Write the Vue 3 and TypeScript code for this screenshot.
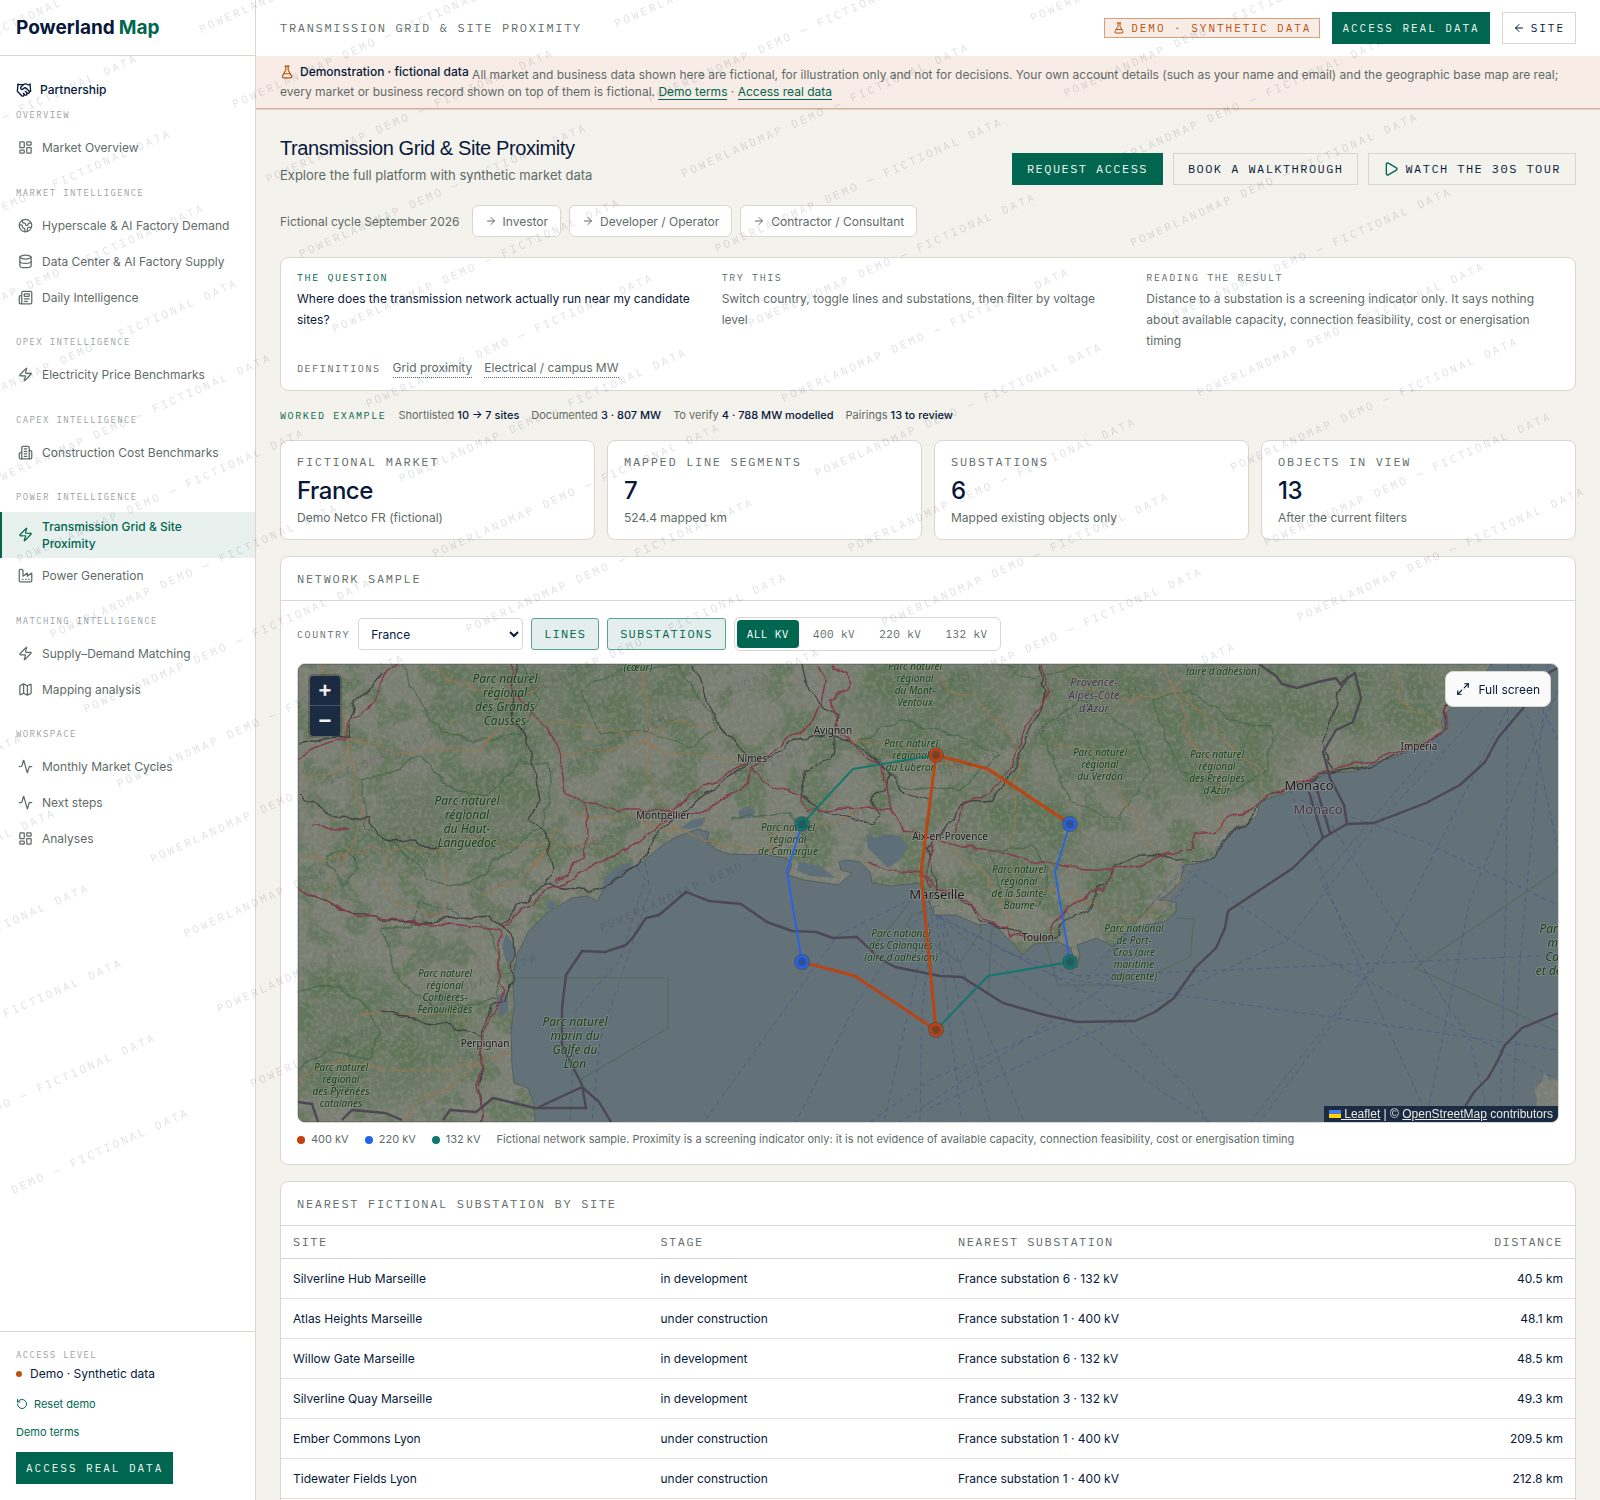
<script setup lang="ts">
import { ref } from 'vue'

type IconName =
  | 'handshake' | 'dashboard' | 'earth' | 'database' | 'newspaper' | 'zap' | 'building'
  | 'factory' | 'map' | 'activity' | 'reset' | 'flask' | 'expand' | 'play' | 'left' | 'right'

const icons: Record<IconName, string[]> = {
  handshake: [
    'm11 17 2 2a1 1 0 1 0 3-3',
    'm14 14 2.5 2.5a1 1 0 1 0 3-3l-3.88-3.88a3 3 0 0 0-4.24 0l-.88.88a1 1 0 1 1-3-3l2.81-2.81a5.79 5.79 0 0 1 7.06-.87l.47.28a2 2 0 0 0 1.42.25L21 4',
    'm21 3 1 11h-2',
    'M3 3 2 14l6.5 6.5a1 1 0 1 0 3-3',
    'M3 4h8',
  ],
  dashboard: [
    'M4 3h5a1 1 0 0 1 1 1v7a1 1 0 0 1-1 1H4a1 1 0 0 1-1-1V4a1 1 0 0 1 1-1z',
    'M15 3h5a1 1 0 0 1 1 1v3a1 1 0 0 1-1 1h-5a1 1 0 0 1-1-1V4a1 1 0 0 1 1-1z',
    'M15 12h5a1 1 0 0 1 1 1v7a1 1 0 0 1-1 1h-5a1 1 0 0 1-1-1v-7a1 1 0 0 1 1-1z',
    'M4 16h5a1 1 0 0 1 1 1v3a1 1 0 0 1-1 1H4a1 1 0 0 1-1-1v-3a1 1 0 0 1 1-1z',
  ],
  earth: [
    'M21.54 15H17a2 2 0 0 0-2 2v4.54',
    'M7 3.34V5a3 3 0 0 0 3 3a2 2 0 0 1 2 2c0 1.1.9 2 2 2a2 2 0 0 0 2-2c0-1.1.9-2 2-2h3.17',
    'M11 21.95V18a2 2 0 0 0-2-2a2 2 0 0 1-2-2v-1a2 2 0 0 0-2-2H2.05',
    'M2 12a10 10 0 1 0 20 0a10 10 0 1 0-20 0',
  ],
  database: ['M3 5a9 3 0 1 0 18 0a9 3 0 1 0-18 0', 'M3 5V19A9 3 0 0 0 21 19V5', 'M3 12A9 3 0 0 0 21 12'],
  newspaper: [
    'M15 18h-5', 'M18 14h-8',
    'M4 22h16a2 2 0 0 0 2-2V4a2 2 0 0 0-2-2H8a2 2 0 0 0-2 2v16a2 2 0 0 1-4 0v-9a2 2 0 0 1 2-2h2',
    'M11 6h6a1 1 0 0 1 1 1v2a1 1 0 0 1-1 1h-6a1 1 0 0 1-1-1V7a1 1 0 0 1 1-1z',
  ],
  zap: ['M4 14a1 1 0 0 1-.78-1.63l9.9-10.2a.5.5 0 0 1 .86.46l-1.92 6.02A1 1 0 0 0 13 10h7a1 1 0 0 1 .78 1.63l-9.9 10.2a.5.5 0 0 1-.86-.46l1.92-6.02A1 1 0 0 0 11 14z'],
  building: [
    'M6 22V4a2 2 0 0 1 2-2h8a2 2 0 0 1 2 2v18Z', 'M6 12H4a2 2 0 0 0-2 2v6a2 2 0 0 0 2 2h2',
    'M18 9h2a2 2 0 0 1 2 2v9a2 2 0 0 1-2 2h-2', 'M10 6h4', 'M10 10h4', 'M10 14h4', 'M10 18h4',
  ],
  factory: ['M2 20a2 2 0 0 0 2 2h16a2 2 0 0 0 2-2V8l-7 5V8l-7 5V4a2 2 0 0 0-2-2H4a2 2 0 0 0-2 2Z', 'M17 18h1', 'M12 18h1', 'M7 18h1'],
  map: [
    'M14.106 5.553a2 2 0 0 0 1.788 0l3.659-1.83A1 1 0 0 1 21 4.619v12.764a1 1 0 0 1-.553.894l-4.553 2.277a2 2 0 0 1-1.788 0l-4.212-2.106a2 2 0 0 0-1.788 0l-3.659 1.83A1 1 0 0 1 3 19.381V6.618a1 1 0 0 1 .553-.894l4.553-2.277a2 2 0 0 1 1.788 0z',
    'M15 5.764v15', 'M9 3.236v15',
  ],
  activity: ['M22 12h-2.48a2 2 0 0 0-1.93 1.46l-2.35 8.36a.25.25 0 0 1-.48 0L9.24 2.18a.25.25 0 0 0-.48 0l-2.35 8.36A2 2 0 0 1 4.49 12H2'],
  reset: ['M3 12a9 9 0 1 0 9-9 9.75 9.75 0 0 0-6.74 2.74L3 8', 'M3 3v5h5'],
  flask: ['M14 2v6a2 2 0 0 0 .245.96l5.51 10.08A2 2 0 0 1 18 22H6a2 2 0 0 1-1.755-2.96l5.51-10.08A2 2 0 0 0 10 8V2', 'M6.453 15h11.094', 'M8.5 2h7'],
  expand: ['M15 3h6v6', 'm21 3-7 7', 'm3 21 7-7', 'M9 21H3v-6'],
  play: ['M5 5a2 2 0 0 1 3.008-1.728l11.997 6.998a2 2 0 0 1 .003 3.458l-12 7A2 2 0 0 1 5 19z'],
  left: ['m12 19-7-7 7-7', 'M19 12H5'],
  right: ['M5 12h14', 'm12 5 7 7-7 7'],
}

interface NavItem { label: string; icon: IconName; active?: boolean }
interface NavGroup { title: string; items: NavItem[] }

const groups: NavGroup[] = [
  { title: 'Overview', items: [{ label: 'Market Overview', icon: 'dashboard' }] },
  {
    title: 'Market intelligence',
    items: [
      { label: 'Hyperscale & AI Factory Demand', icon: 'earth' },
      { label: 'Data Center & AI Factory Supply', icon: 'database' },
      { label: 'Daily Intelligence', icon: 'newspaper' },
    ],
  },
  { title: 'Opex intelligence', items: [{ label: 'Electricity Price Benchmarks', icon: 'zap' }] },
  { title: 'Capex intelligence', items: [{ label: 'Construction Cost Benchmarks', icon: 'building' }] },
  {
    title: 'Power intelligence',
    items: [
      { label: 'Transmission Grid & Site Proximity', icon: 'zap', active: true },
      { label: 'Power Generation', icon: 'factory' },
    ],
  },
  {
    title: 'Matching intelligence',
    items: [
      { label: 'Supply–Demand Matching', icon: 'zap' },
      { label: 'Mapping analysis', icon: 'map' },
    ],
  },
  {
    title: 'Workspace',
    items: [
      { label: 'Monthly Market Cycles', icon: 'activity' },
      { label: 'Next steps', icon: 'activity' },
      { label: 'Analyses', icon: 'dashboard' },
    ],
  },
]

const personas = ['Investor', 'Developer / Operator', 'Contractor / Consultant']

const guide = [
  { title: 'The question', text: 'Where does the transmission network actually run near my candidate sites?', lead: true },
  { title: 'Try this', text: 'Switch country, toggle lines and substations, then filter by voltage level', lead: false },
  { title: 'Reading the result', text: 'Distance to a substation is a screening indicator only. It says nothing about available capacity, connection feasibility, cost or energisation timing', lead: false },
]

const worked = [
  { label: 'Shortlisted', value: '10 → 7 sites' },
  { label: 'Documented', value: '3 · 807 MW' },
  { label: 'To verify', value: '4 · 788 MW modelled' },
  { label: 'Pairings', value: '13 to review' },
]

const stats = [
  { label: 'Fictional market', value: 'France', note: 'Demo Netco FR (fictional)' },
  { label: 'Mapped line segments', value: '7', note: '524.4 mapped km' },
  { label: 'Substations', value: '6', note: 'Mapped existing objects only' },
  { label: 'Objects in view', value: '13', note: 'After the current filters' },
]

const country = ref('France')
const voltage = ref('ALL KV')
const voltages = ['ALL KV', '400 kV', '220 kV', '132 kV']
const showLines = ref(true)
const showSubstations = ref(true)

const legend = [
  { label: '400 kV', color: '#c2410c' },
  { label: '220 kV', color: '#2563eb' },
  { label: '132 kV', color: '#0f766e' },
]

const rows = [
  ['Silverline Hub Marseille', 'in development', 'France substation 6 · 132 kV', '40.5 km'],
  ['Atlas Heights Marseille', 'under construction', 'France substation 1 · 400 kV', '48.1 km'],
  ['Willow Gate Marseille', 'in development', 'France substation 6 · 132 kV', '48.5 km'],
  ['Silverline Quay Marseille', 'in development', 'France substation 3 · 132 kV', '49.3 km'],
  ['Ember Commons Lyon', 'under construction', 'France substation 1 · 400 kV', '209.5 km'],
  ['Tidewater Fields Lyon', 'under construction', 'France substation 1 · 400 kV', '212.8 km'],
]

/* Base map geometry, in the map's own drawing units */
const land =
  'M298 664H1492L1477 682L1460 698L1447 712L1441 722L1443 732L1421 745L1400 755L1374 763L1355 772L1330 772L1319 777L1297 785L1287 793L1272 797L1261 802L1257 815L1248 825L1229 832L1223 845L1214 859L1195 864L1184 865L1180 882L1171 892L1159 900L1176 902L1176 912L1165 922L1144 925L1122 935L1114 947L1097 938L1077 945L1080 955L1077 968L1073 957L1071 948L1058 942L1034 944L1030 948L1022 955L1015 945L1007 938L994 923L979 925L956 915L934 915L930 902L924 888L918 883L891 886L872 883L870 872L860 862L846 860L839 862L841 870L852 873L844 880L839 885L804 880L788 875L792 865L787 858L767 855L730 854L717 850L707 842L709 832L698 829L676 837L659 848L642 862L622 872L605 888L597 901L588 896L572 898L547 913L528 932L517 955L513 978L514 1005L511 1032L512 1065L514 1083L528 1088L534 1105L535 1122H298Z'
const corsica = 'M1535 1122L1537 1100L1534 1087L1542 1082L1545 1072L1549 1080L1558 1078V1122Z'
const lagoons =
  'M866 834L876 838L886 834L900 836L908 846L900 860L888 868L878 858L868 848ZM601 890L606 876L622 864L634 862L622 874L610 886ZM680 828L692 820L706 817L702 826L690 829ZM497 995L508 994L508 1012L500 1018L497 1008ZM502 945L506 934L512 942L516 954L508 964L504 956ZM738 812L748 806L756 812L750 818L740 818ZM800 862L820 866L836 878L810 876L796 870ZM546 908L550 900L556 904L552 911Z'
const forests =
  'M300 980L350 960L400 990L470 1000L480 1040L440 1090L380 1110L298 1080ZM320 850L360 835L400 780L520 760L560 800L520 850L440 870L360 870ZM440 664H560L600 700L560 760L480 740L430 710ZM560 664H690L680 720L610 740L570 700ZM860 664H1020L1010 740L900 760L850 720ZM1030 664H1330L1310 740L1240 790L1130 800L1040 760ZM960 770L1060 790L1090 850L1000 900L960 850ZM1080 860L1160 850L1150 910L1090 920ZM1330 664H1480L1440 720L1380 750L1340 740Z'

const roadsRed = [
  'M298 760L315 748L330 742L345 738L352 720L368 706L378 690L384 675L398 664',
  'M510 664L512 690L530 712L548 730L560 752L564 778L566 792L584 802L600 804L620 810L650 810L700 812L740 790L752 768L770 752L790 740L810 722L822 704L826 680L818 664',
  'M298 888L330 902L360 917L400 920L440 924L500 930L498 955L500 985L506 990L490 1020L482 1045L478 1085L484 1122',
  'M502 928L530 902L556 886L580 872L600 862L640 842L664 820L690 792L720 780L748 762',
  'M586 802L588 835L582 858L556 882',
  'M752 768L770 786L800 796L806 810L840 808L890 810L886 790L882 768L860 750L840 730L830 700L848 690L846 672L832 664',
  'M890 810L904 830L930 838L960 848L1000 850L1030 860L1070 868L1110 870L1136 866L1168 852L1190 850L1196 834L1214 832L1230 820L1256 806L1270 796L1300 782L1330 770L1380 758L1420 745L1444 730L1446 708',
  'M935 845L925 875L938 890L968 900L985 920L1008 925L1012 936L1045 940L1058 920L1066 908L1086 898L1104 890L1114 870',
  'M1040 664L1050 690L1036 710L1022 740L1008 774L990 792L965 805L952 835',
  'M870 862L890 870L920 872L930 885',
  'M312 826L324 826L332 831L348 828',
]
const rails = [
  'M298 794L312 800L340 818L370 820L380 836L410 843L440 845',
  'M298 888L340 908L380 920L420 922L460 918L490 915L500 926L512 938L514 975L506 1000L490 1008L482 1040L480 1070L482 1122',
  'M500 926L530 894L552 884L590 890L610 884L640 862L660 828L690 805L720 784L752 762L780 752L800 738L830 736L848 740L870 752L878 762L902 790L930 800',
  'M516 664L512 690L514 720L528 738L536 780L540 800L530 822L545 836L552 870L548 884',
  'M696 664L704 690L712 715L740 750L752 760',
  'M802 664L808 690L824 708L838 716L830 760L806 770L800 795L820 808L870 824L880 814L870 804L890 776L872 756',
  'M1038 664L1046 690L1036 720L1022 750L1010 780L992 800L965 803L950 820L930 850L936 885L930 895',
  'M930 897L950 895L972 905L980 922L1008 926L1026 938L1056 938L1064 920L1088 910L1114 868L1140 856L1170 855L1190 865L1212 858L1226 836L1256 812L1262 800L1300 784L1330 772L1370 766L1400 754L1440 734L1446 708L1470 686',
  'M1330 768L1324 740L1334 710L1340 690L1348 674',
  'M298 745L330 738L350 735L356 700L372 684L384 672',
  'M380 1014L410 1018L430 1024L470 1030L484 1035',
]
const roadsOrange = [
  'M298 856L330 860L370 848L400 850L440 848L480 840L540 846L560 830',
  'M320 664L330 680L345 720L352 760L355 790L362 816L350 850L330 880L325 905',
  'M350 737L400 752L440 748L480 748L500 728L525 722L560 722L590 728L640 735L680 720L720 735',
  'M430 664L450 680L480 690L520 700L540 685',
  'M560 752L600 750L640 742L660 752L690 752L740 760',
  'M442 848L446 880L440 920',
  'M362 1014L400 1016L440 1010L470 1022',
  'M570 815L640 818L700 838L730 846L770 848L780 832L838 822L866 808',
  'M640 664L648 720L650 790L668 812L672 832',
  'M930 664L950 690L975 700L1000 720L1020 760L1015 800L1010 850',
  'M1060 664L1090 690L1130 700L1180 690L1200 710L1230 745L1260 770L1262 800',
  'M1050 740L1100 760L1140 820L1150 850',
  'M1160 664L1180 700L1190 740L1220 770L1222 830',
  'M1396 664L1400 700L1430 715L1445 730',
  'M850 740L900 745L940 765L990 770L1010 790',
  'M300 1080L340 1060L400 1072L450 1068L480 1062L512 1050',
  'M400 1122L420 1100L460 1080L478 1060',
  'M940 845L980 870L1000 900L1010 925',
  'M1000 900L1050 890L1100 905L1140 920L1170 900L1190 868',
  'M300 780L340 770L350 740', 'M390 850L384 880L395 905L440 915', 'M480 895L520 880L548 850L600 840',
]
const parks = [
  'M325 855L350 850L360 870L345 885L330 870ZM362 780L400 770L420 755L450 790L490 794L520 760L548 765L550 800L540 830L500 858L470 885L430 882L392 840L366 830Z',
  'M400 664L420 700L440 735L480 740L520 735L540 700L520 664',
  'M580 690L620 670L680 664L700 700L720 730L690 745L640 730L600 735Z',
  'M383 930L410 925L420 900L460 915L490 930L500 960L498 1000L440 1010L400 980L390 950Z',
  'M298 990L340 985L360 1000L380 1030L370 1060L330 1050L298 1070',
  'M860 740L900 720L960 735L1000 755L960 790L900 785L880 760Z',
  'M1040 730L1080 700L1130 730L1150 770L1120 820L1070 800Z',
  'M1150 700L1190 690L1230 720L1270 730L1270 770L1230 790L1180 770Z',
  'M990 850L1030 845L1050 870L1040 905L1000 900Z',
  'M1000 664L1030 680L1080 664',
  'M730 820L790 810L810 850',
]
const marineParks = [
  'M513 978H668V1028L580 1080',
  'M1045 942L1058 985H1130L1190 957L1194 919L1176 918',
  'M979 925L982 930L960 963L935 945L906 925L912 915L940 905',
  'M992 925L988 995',
  'M1558 870L1415 968L1558 1032',
  'M890 945L870 950L900 915L918 890',
]
const ferries = [
  'M638 868L645 880L620 960L576 1010L570 1122', 'M645 862L650 890L600 1040L592 1122',
  'M930 890L838 935L704 1122', 'M932 898L858 1000L796 1122', 'M934 905L920 960L884 1122', 'M934 910L922 1010L920 1122',
  'M936 915L962 1122', 'M938 915L990 1122', 'M940 915L1024 1122', 'M936 915L1160 1090L1210 1122', 'M938 915L1100 1000L1190 1090L1208 1122',
  'M940 918L1060 978L1558 1050', 'M1000 950L1080 976L1180 972L1558 955', 'M1180 865L1290 940L1480 1040L1558 1080',
  'M1230 832L1100 990L900 1122', 'M1290 790L1348 940L1430 1122', 'M1300 800L1420 840L1558 905', 'M1312 795L1470 1040L1490 1122',
  'M1500 690L1372 830L1288 940L1140 1010L930 1108', 'M1508 664L1506 900L1500 1122', 'M1530 664L1380 960L1260 1122',
  'M1520 664L1558 740', 'M1490 664L1530 720L1558 850', 'M1558 690L1470 900L1426 1122', 'M1184 866L1070 1000',
  'M1184 870L1100 960', 'M1548 664L1520 960L1512 1122', 'M1440 740L1320 880L1370 970L1250 1122', 'M870 1122L930 1080L1070 1020',
]
const seaBorders = [
  'M535 1108H586L582 1085L562 1045V1008L566 975L582 951L605 952L626 945L634 936L646 918L659 915L672 904L686 892L709 901L741 904L767 922L792 931L816 932L833 938L857 937L879 958L895 967L940 976L962 977L1003 1003L1045 1015L1077 1022L1135 1021L1155 1012L1174 998L1195 968L1216 948L1225 928L1228 911L1293 868L1323 838L1347 824L1374 823L1426 803L1460 785L1485 762L1498 738L1524 707L1550 672L1558 668',
  'M539 1107L582 1087L599 1102L611 1122',
  'M1259 664L1276 676L1282 684L1297 688L1318 682L1336 678L1340 684L1355 673L1361 698L1353 722L1336 730L1323 752L1330 778L1344 805L1347 824',
  'M1309 792L1323 838', 'M1317 790L1330 833',
  'M1558 1013L1522 1028L1505 1045L1497 1062L1488 1078L1474 1092L1466 1105L1462 1122',
  'M298 1102L312 1104L318 1122', 'M342 1120L352 1110L385 1113L402 1120', 'M443 1120L450 1110L476 1112L493 1098L514 1103L535 1108',
]

interface MapLabel { x: number; y: number; size: number; gap: number; kind: 'park' | 'city' | 'area'; lines: string[] }
const mapLabels: MapLabel[] = [
  { x: 505, y: 683, size: 12, gap: 14, kind: 'park', lines: ['Parc naturel', 'régional', 'des Grands', 'Causses'] },
  { x: 467, y: 805, size: 12, gap: 14, kind: 'park', lines: ['Parc naturel', 'régional', 'du Haut-', 'Languedoc'] },
  { x: 445, y: 977, size: 10, gap: 12, kind: 'park', lines: ['Parc naturel', 'régional', 'Corbières-', 'Fenouillèdes'] },
  { x: 575, y: 1026, size: 12, gap: 14, kind: 'park', lines: ['Parc naturel', 'marin du', 'Golfe du', 'Lion'] },
  { x: 341, y: 1071, size: 10, gap: 12, kind: 'park', lines: ['Parc naturel', 'régional', 'des Pyrénées', 'catalanes'] },
  { x: 788, y: 831, size: 10, gap: 12, kind: 'park', lines: ['Parc naturel', 'régional', 'de Camargue'] },
  { x: 911, y: 747, size: 10, gap: 12, kind: 'park', lines: ['Parc naturel', 'régional', 'du Luberon'] },
  { x: 915, y: 670, size: 10, gap: 12, kind: 'park', lines: ['Parc naturel', 'régional', 'du Mont-', 'Ventoux'] },
  { x: 638, y: 671, size: 10, gap: 12, kind: 'park', lines: ['(cœur)'] },
  { x: 901, y: 937, size: 10, gap: 12, kind: 'park', lines: ['Parc national', 'des Calanques', "(aire d'adhésion)"] },
  { x: 1019, y: 873, size: 10, gap: 12, kind: 'park', lines: ['Parc naturel', 'régional', 'de la Sainte-', 'Baume'] },
  { x: 1100, y: 756, size: 10, gap: 12, kind: 'park', lines: ['Parc naturel', 'régional', 'du Verdon'] },
  { x: 1217, y: 758, size: 10, gap: 12, kind: 'park', lines: ['Parc naturel', 'régional', 'des Préalpes', "d'Azur"] },
  { x: 1223, y: 675, size: 10, gap: 12, kind: 'park', lines: ["(aire d'adhésion)"] },
  { x: 1134, y: 932, size: 10, gap: 12, kind: 'park', lines: ['Parc national', 'de Port-', 'Cros (aire', 'maritime', 'adjacente)'] },
  { x: 1572, y: 933, size: 12, gap: 14, kind: 'park', lines: ['Parc naturel', 'marin du', 'Cap Corse', "et de l'Agriate"] },
  { x: 1094, y: 686, size: 11, gap: 13, kind: 'area', lines: ['Provence-', 'Alpes-Côte', "d'Azur"] },
  { x: 833, y: 734, size: 10, gap: 12, kind: 'city', lines: ['Avignon'] },
  { x: 752, y: 762, size: 10, gap: 12, kind: 'city', lines: ['Nîmes'] },
  { x: 663, y: 819, size: 10, gap: 12, kind: 'city', lines: ['Montpellier'] },
  { x: 485, y: 1047, size: 10, gap: 12, kind: 'city', lines: ['Perpignan'] },
  { x: 950, y: 840, size: 10, gap: 12, kind: 'city', lines: ['Aix-en-Provence'] },
  { x: 937, y: 899, size: 13, gap: 14, kind: 'city', lines: ['Marseille'] },
  { x: 1038, y: 941, size: 10, gap: 12, kind: 'city', lines: ['Toulon'] },
  { x: 1309, y: 790, size: 13, gap: 14, kind: 'city', lines: ['Monaco'] },
  { x: 1419, y: 750, size: 10, gap: 12, kind: 'city', lines: ['Imperia'] },
]

const gridLines = [
  { d: 'M936 755L853 769L802 824', color: '#0f766e', w: 2 },
  { d: 'M1070 962L988 976L936 1030', color: '#0f766e', w: 2 },
  { d: 'M802 824L787 872L802 962', color: '#2563eb', w: 2 },
  { d: 'M1070 824L1055 872L1070 962', color: '#2563eb', w: 2 },
  { d: 'M936 755L988 769L1070 824', color: '#c2410c', w: 3 },
  { d: 'M936 755L921 873L936 1030', color: '#c2410c', w: 3 },
  { d: 'M802 962L855 976L936 1030', color: '#c2410c', w: 3 },
]
const gridNodes = [
  { x: 936, y: 755, color: '#c2410c' },
  { x: 936, y: 1030, color: '#c2410c' },
  { x: 1070, y: 824, color: '#2563eb' },
  { x: 802, y: 962, color: '#2563eb' },
  { x: 802, y: 824, color: '#0f766e' },
  { x: 1070, y: 962, color: '#0f766e' },
]
</script>

<template>
  <div class="shell">
    <aside class="sidebar">
      <div class="brand"><a href="#" class="logo">Powerland<span>Map</span></a></div>
      <nav class="nav">
        <a href="#" class="partner">
          <svg class="ico i16" viewBox="0 0 24 24"><path v-for="d in icons.handshake" :key="d" :d="d" /></svg>
          Partnership
        </a>
        <div v-for="g in groups" :key="g.title" class="group">
          <p class="group-title">{{ g.title }}</p>
          <a v-for="it in g.items" :key="it.label" href="#" class="item" :class="{ active: it.active }">
            <svg class="ico i15" viewBox="0 0 24 24"><path v-for="d in icons[it.icon]" :key="d" :d="d" /></svg>
            <span>{{ it.label }}</span>
          </a>
        </div>
      </nav>
      <div class="side-foot">
        <p class="group-title flat">Access level</p>
        <p class="level"><i></i>Demo · Synthetic data</p>
        <button type="button" class="link-btn">
          <svg class="ico i12" viewBox="0 0 24 24"><path v-for="d in icons.reset" :key="d" :d="d" /></svg>
          Reset demo
        </button>
        <a href="#" class="terms">Demo terms</a>
        <a href="#" class="btn solid small">Access real data</a>
      </div>
    </aside>

    <div class="main">
      <header class="top">
        <div class="bar">
          <span class="crumb">Transmission Grid &amp; Site Proximity</span>
          <span class="badge">
            <svg class="ico i12" viewBox="0 0 24 24"><path v-for="d in icons.flask" :key="d" :d="d" /></svg>
            Demo · Synthetic data
          </span>
          <a href="#" class="btn solid small">Access real data</a>
          <a href="#" class="btn ghost small white">
            <svg class="ico i12" viewBox="0 0 24 24"><path v-for="d in icons.left" :key="d" :d="d" /></svg>
            Site
          </a>
        </div>
        <div class="banner">
          <strong>
            <svg class="ico i14" viewBox="0 0 24 24"><path v-for="d in icons.flask" :key="d" :d="d" /></svg>
            Demonstration · fictional data
          </strong>
          All market and business data shown here are fictional, for illustration only and not for decisions. Your own
          account details (such as your name and email) and the geographic base map are real; every market or business
          record shown on top of them is fictional. <a href="#">Demo terms</a> · <a href="#">Access real data</a>
        </div>
      </header>

      <main class="content">
        <section class="head">
          <div>
            <h1>Transmission Grid &amp; Site Proximity</h1>
            <p>Explore the full platform with synthetic market data</p>
          </div>
          <div class="actions">
            <button type="button" class="btn solid">Request access</button>
            <button type="button" class="btn ghost">Book a walkthrough</button>
            <button type="button" class="btn ghost">
              <svg class="ico i16 play" viewBox="0 0 24 24"><path v-for="d in icons.play" :key="d" :d="d" /></svg>
              Watch the 30s tour
            </button>
          </div>
        </section>

        <section class="personas">
          <span>Fictional cycle September 2026</span>
          <div class="chips">
            <button v-for="p in personas" :key="p" type="button" class="chip">
              <svg class="ico i12" viewBox="0 0 24 24"><path v-for="d in icons.right" :key="d" :d="d" /></svg>
              {{ p }}
            </button>
          </div>
        </section>

        <section class="card guide">
          <div class="guide-cols">
            <div v-for="g in guide" :key="g.title" :class="{ lead: g.lead }">
              <h2 class="tag">{{ g.title }}</h2>
              <p>{{ g.text }}</p>
            </div>
          </div>
          <div class="defs">
            <span class="tag">Definitions</span>
            <a href="#">Grid proximity</a>
            <a href="#">Electrical / campus MW</a>
          </div>
        </section>

        <section class="worked">
          <span class="tag">Worked example</span>
          <span v-for="w in worked" :key="w.label">{{ w.label }} <b>{{ w.value }}</b></span>
        </section>

        <section class="stats">
          <article v-for="s in stats" :key="s.label" class="card stat">
            <h3>{{ s.label }}</h3>
            <p class="value">{{ s.value }}</p>
            <p class="note">{{ s.note }}</p>
          </article>
        </section>

        <section class="card">
          <h2 class="card-title">Network sample</h2>
          <div class="card-body">
            <div class="controls">
              <label for="country" class="tag">Country</label>
              <select id="country" v-model="country">
                <option>France</option>
              </select>
              <button type="button" class="toggle" :aria-pressed="showLines" @click="showLines = !showLines">Lines</button>
              <button type="button" class="toggle" :aria-pressed="showSubstations" @click="showSubstations = !showSubstations">Substations</button>
              <div class="segmented">
                <button v-for="v in voltages" :key="v" type="button" :class="{ on: v === voltage }" @click="voltage = v">{{ v }}</button>
              </div>
            </div>

            <div class="map">
              <svg class="map-svg" viewBox="298 664 1260 458" preserveAspectRatio="xMidYMid slice">
                <defs>
                  <clipPath id="landClip"><path :d="land" /><path :d="corsica" /></clipPath>
                  <filter id="patches" x="0" y="0" width="100%" height="100%" color-interpolation-filters="sRGB">
                    <feTurbulence type="fractalNoise" baseFrequency="0.03" numOctaves="6" seed="11" />
                    <feColorMatrix values="0 0 0 0 0.36  0 0 0 0 0.45  0 0 0 0 0.34  8 0 0 0 -3.9" />
                  </filter>
                  <filter id="relief" x="0" y="0" width="100%" height="100%" color-interpolation-filters="sRGB">
                    <feTurbulence type="fractalNoise" baseFrequency="0.22" numOctaves="3" seed="4" />
                    <feColorMatrix values="0 0 0 0 0.55  0 0 0 0 0.56  0 0 0 0 0.52  0 7 0 0 -3.4" />
                  </filter>
                  <filter id="wiggle" filterUnits="userSpaceOnUse" x="290" y="656" width="1276" height="474">
                    <feTurbulence type="fractalNoise" baseFrequency="0.05" numOctaves="2" seed="7" />
                    <feDisplacementMap in="SourceGraphic" scale="12" xChannelSelector="R" yChannelSelector="G" />
                  </filter>
                  <filter id="soft"><feGaussianBlur stdDeviation="9" /></filter>
                </defs>
                <rect x="298" y="664" width="1260" height="458" fill="#637179" />
                <path :d="land" fill="#83827b" />
                <path :d="corsica" fill="#83827b" />
                <g clip-path="url(#landClip)">
                  <rect x="298" y="664" width="1260" height="458" fill="#647a5c" opacity="0.2" />
                  <path :d="forests" fill="#5f745a" opacity="0.55" filter="url(#soft)" />
                  <rect x="298" y="664" width="1260" height="458" filter="url(#patches)" opacity="0.65" />
                  <rect x="298" y="664" width="1260" height="458" filter="url(#relief)" opacity="0.4" />
                </g>
                <path :d="lagoons" fill="#5f6f79" />
                <path :d="land" fill="none" stroke="#545f60" />
                <g fill="none" stroke-linejoin="round">
                  <g filter="url(#wiggle)">
                    <path v-for="d in parks" :key="d" :d="d" stroke="#456848" stroke-width="1.3" opacity="0.8" />
                    <path v-for="d in roadsOrange" :key="d" :d="d" stroke="#98764f" stroke-width="1.1" />
                    <path v-for="d in rails" :key="d" :d="d" stroke="#424243" stroke-width="1.3" />
                    <path v-for="d in roadsRed" :key="d" :d="d" stroke="#843c4c" stroke-width="1.5" />
                  </g>
                  <path v-for="d in marineParks" :key="d" :d="d" stroke="#4a6a58" stroke-width="1.2" opacity="0.7" />
                  <path v-for="d in ferries" :key="d" :d="d" stroke="#4b5684" stroke-dasharray="5 4" opacity="0.75" />
                  <path v-for="d in seaBorders" :key="d" :d="d" stroke="#4d4753" stroke-width="2.4" />
                </g>
                <text
                  v-for="(l, i) in mapLabels" :key="i" :class="l.kind" :font-size="l.size" text-anchor="middle"
                ><tspan v-for="(t, n) in l.lines" :key="n" :x="l.x" :y="l.y + n * l.gap">{{ t }}</tspan></text>
                <text class="area upright" x="1318" y="814" font-size="13" text-anchor="middle">Monaco</text>
                <g v-if="showLines" fill="none" stroke-linejoin="round" stroke-linecap="round" opacity="0.9">
                  <path v-for="g in gridLines" :key="g.d" :d="g.d" :stroke="g.color" :stroke-width="g.w" />
                </g>
                <g v-if="showSubstations">
                  <g v-for="(n, i) in gridNodes" :key="i">
                    <circle :cx="n.x" :cy="n.y" r="8" fill="#333f4a" opacity="0.5" />
                    <circle :cx="n.x" :cy="n.y" r="6" :fill="n.color" fill-opacity="0.7" :stroke="n.color" stroke-width="2" />
                    <circle :cx="n.x" :cy="n.y" r="4" fill="#26324a" opacity="0.3" />
                  </g>
                </g>
              </svg>
              <div class="zoom">
                <button type="button" aria-label="Zoom in">+</button>
                <button type="button" aria-label="Zoom out">−</button>
              </div>
              <button type="button" class="full">
                <svg class="ico i14" viewBox="0 0 24 24"><path v-for="d in icons.expand" :key="d" :d="d" /></svg>
                Full screen
              </button>
              <div class="credit">
                <a href="#"><svg viewBox="0 0 12 8" width="12" height="8"><path fill="#4C7BE1" d="M0 0h12v4H0z" /><path fill="#FFD500" d="M0 4h12v4H0z" /></svg> Leaflet</a>
                | © <a href="#">OpenStreetMap</a> contributors
              </div>
            </div>

            <div class="legend">
              <span v-for="l in legend" :key="l.label" class="key"><i :style="{ background: l.color }"></i>{{ l.label }}</span>
              <span>Fictional network sample. Proximity is a screening indicator only: it is not evidence of available capacity, connection feasibility, cost or energisation timing</span>
            </div>
          </div>
        </section>

        <section class="card sites">
          <h2 class="card-title">Nearest fictional substation by site</h2>
          <table>
            <colgroup><col class="c1" /><col class="c2" /><col /><col class="c4" /></colgroup>
            <thead>
              <tr><th>Site</th><th>Stage</th><th>Nearest substation</th><th class="num">Distance</th></tr>
            </thead>
            <tbody>
              <tr v-for="r in rows" :key="r[0]">
                <td>{{ r[0] }}</td><td>{{ r[1] }}</td><td>{{ r[2] }}</td><td class="num">{{ r[3] }}</td>
              </tr>
            </tbody>
          </table>
        </section>
      </main>
    </div>

    <div class="watermark" aria-hidden="true">
      <div class="marks">
        <span v-for="n in 70" :key="n">POWERLANDMAP DEMO — FICTIONAL DATA</span>
      </div>
    </div>
  </div>
</template>

<style>
html, body { margin: 0; height: 100%; }
#app { height: 100%; }
</style>

<style scoped>
.shell {
  --ink: #07183a;
  --muted: #5f6b68;
  --faint: #9ba19f;
  --line: #d8d6ce;
  --green: #00664f;
  --amber: #b9520b;
  --mono: "IBM Plex Mono", "Liberation Mono", monospace;
  position: relative;
  display: grid;
  grid-template-columns: 256px 1fr;
  height: 100vh;
  overflow: hidden;
  background: #f4f2ec;
  color: var(--ink);
  font-family: Inter, sans-serif;
  font-size: 12px;
  line-height: 1.45;
}
.shell * { box-sizing: border-box; }
h1, h2, h3, p { margin: 0; font-weight: 400; }
a { color: inherit; text-decoration: none; }
button { font: inherit; color: inherit; cursor: pointer; margin: 0; }

.ico { flex: none; fill: none; stroke: currentColor; stroke-width: 2; stroke-linecap: round; stroke-linejoin: round; }
.i12 { width: 12px; height: 12px; }
.i14 { width: 14px; height: 14px; }
.i15 { width: 15px; height: 15px; }
.i16 { width: 16px; height: 16px; }

.sidebar { display: flex; flex-direction: column; background: #fff; border-right: 1px solid var(--line); min-height: 0; }
.brand { display: flex; align-items: center; height: 56px; padding: 0 16px; border-bottom: 1px solid var(--line); }
.logo { font-size: 19px; font-weight: 700; line-height: 24px; }
.logo span { color: var(--green); margin-left: 4px; }
.nav { flex: 1; padding-top: 16px; overflow: hidden; }
.partner { display: flex; align-items: center; gap: 8px; height: 36px; padding: 0 16px; font-weight: 500; }
.group { margin-bottom: 20px; }
.group-title {
  margin-bottom: 8px; padding-left: 16px; color: var(--faint);
  font: 9px/1.5 var(--mono); letter-spacing: 0.15em; text-transform: uppercase;
}
.group-title.flat { padding: 0; margin: 0; }
.item {
  display: flex; align-items: center; gap: 9px; min-height: 36px; padding: 6px 16px; border-left: 2px solid transparent;
  color: var(--muted); line-height: 17px;
}
.item.active { background: #e8f1ee; border-color: var(--green); color: var(--green); font-weight: 500; }
.item.active span { max-width: 160px; }
.side-foot { display: flex; flex-direction: column; align-items: flex-start; padding: 16px; border-top: 1px solid var(--line); }
.level { display: flex; align-items: center; gap: 8px; margin-top: 3px; line-height: 20px; }
.level i { width: 6px; height: 6px; border-radius: 50%; background: var(--amber); }
.link-btn { display: flex; align-items: center; gap: 6px; margin-top: 12px; padding: 0; border: 0; background: none; color: var(--green); font-size: 11px; line-height: 16px; }
.terms { margin: 12px 0; color: var(--green); font-size: 11px; line-height: 16px; }

.btn {
  display: inline-flex; align-items: center; gap: 6px; height: 32px; padding: 0 14px; border: 1px solid var(--line); border-radius: 0;
  background: none; font: 12px/16px var(--mono); letter-spacing: 0.12em; text-transform: uppercase; white-space: nowrap;
}
.btn.solid { background: var(--green); border-color: var(--green); color: #f3f7f5; }
.btn.small { padding: 0 9px; font-size: 11px; letter-spacing: 0.18em; }
.btn.white { background: #fff; padding: 0 10px; }
.play { color: var(--green); }

.main { display: flex; flex-direction: column; min-width: 0; min-height: 0; }
.top { border-bottom: 1px solid var(--line); }
.bar { display: flex; align-items: center; gap: 12px; height: 56px; padding: 0 24px; background: #fff; }
.crumb { flex: 1; color: var(--muted); font: 12px/16px var(--mono); letter-spacing: 0.14em; text-transform: uppercase; }
.badge {
  display: inline-flex; align-items: center; gap: 6px; height: 20px; padding: 0 8px; border: 1px solid #d9a078; background: #f8ece6;
  color: var(--amber); font: 11px/16px var(--mono); letter-spacing: 0.18em; text-transform: uppercase;
}
.banner { padding: 7px 24px 8px; background: #f8ece6; border-bottom: 1px solid #e0ac84; color: var(--muted); }
.banner strong { display: inline-flex; align-items: center; gap: 6px; color: var(--ink); font-weight: 500; }
.banner strong svg { color: var(--amber); }
.banner a { color: var(--green); border-bottom: 1px solid var(--green); }

.content { flex: 1; min-height: 0; padding: 24px; overflow-y: auto; scrollbar-width: none; }
.head { display: flex; justify-content: space-between; align-items: flex-end; }
h1 { font: 500 20px/28px "Liberation Sans", Arial, sans-serif; letter-spacing: -0.02em; }
.head p { margin-top: 3px; color: var(--muted); font-size: 13px; line-height: 20px; }
.actions { display: flex; gap: 10px; }
.personas { display: flex; align-items: center; gap: 12px; margin-top: 20px; color: var(--muted); }
.chips { display: flex; gap: 8px; }
.chip { display: flex; align-items: center; gap: 6px; height: 32px; padding: 0 12px; border: 1px solid var(--line); border-radius: 6px; background: #fff; }

.card { background: #fff; border: 1px solid var(--line); border-radius: 8px; margin-top: 16px; }
.tag { color: var(--muted); font: 10px/15px var(--mono); letter-spacing: 0.16em; text-transform: uppercase; }
.guide { margin-top: 20px; padding: 12px 16px; }
.guide-cols { display: grid; grid-template-columns: repeat(3, 1fr); gap: 12px; }
.guide-cols p { margin-top: 3px; padding-right: 12px; color: var(--muted); line-height: 21px; }
.guide-cols .lead .tag { color: var(--green); }
.guide-cols .lead p { color: var(--ink); }
.defs { display: flex; align-items: center; gap: 12px; margin-top: 8px; line-height: 18px; color: var(--muted); }
.defs a { border-bottom: 1px dotted var(--muted); }
.worked { display: flex; align-items: center; gap: 12px; margin-top: 16px; font-size: 11px; line-height: 17px; color: var(--muted); }
.worked .tag { color: var(--green); }
.worked b { color: var(--ink); font-weight: 500; }

.stats { display: grid; grid-template-columns: repeat(4, 1fr); gap: 12px; margin-top: 16px; }
.stat { margin: 0; height: 100px; padding: 12px 16px; }
.stat h3 { color: var(--muted); font: 12px/18px var(--mono); letter-spacing: 0.14em; text-transform: uppercase; }
.value { margin-top: 5px; font-size: 24px; font-weight: 500; line-height: 29px; letter-spacing: -0.02em; }
.note { margin-top: 4px; color: var(--muted); line-height: 17px; }

.card-title {
  padding: 13px 16px; border-bottom: 1px solid var(--line); color: var(--muted);
  font: 12px/17px var(--mono); letter-spacing: 0.14em; text-transform: uppercase;
}
.card-body { padding: 16px; }
.controls { display: flex; align-items: center; gap: 8px; }
.controls select { width: 165px; height: 32px; padding: 0 8px; border: 1px solid var(--line); border-radius: 4px; background: #fff; color: var(--ink); font: 12px Inter, sans-serif; }
.toggle {
  height: 32px; padding: 0 12px; border: 1px solid #5aa392; border-radius: 3px; background: #e4efed; color: var(--green);
  font: 12px/16px var(--mono); letter-spacing: 0.1em; text-transform: uppercase;
}
.segmented { display: flex; gap: 4px; padding: 2px; border: 1px solid var(--line); border-radius: 6px; }
.segmented button { height: 28px; padding: 0 10px; border: 0; border-radius: 4px; background: none; color: var(--muted); font: 11px/16px var(--mono); letter-spacing: 0.04em; }
.segmented .on { background: var(--green); color: #fff; }

.map { position: relative; height: 460px; margin-top: 12px; border: 1px solid var(--line); border-radius: 8px; overflow: hidden; }
.map-svg { display: block; width: 100%; height: 100%; }
.map-svg text { font-family: "Noto Sans", sans-serif; paint-order: stroke; stroke-linejoin: round; }
.map-svg .park { fill: #183f1c; font-style: italic; stroke: rgba(150, 160, 145, 0.45); stroke-width: 2px; }
.map-svg .city { fill: #1a1a1a; stroke: rgba(160, 160, 155, 0.6); stroke-width: 2px; }
.map-svg .area { fill: #44384a; font-style: italic; stroke: rgba(150, 150, 150, 0.5); stroke-width: 2px; }
.map-svg .upright { font-style: normal; }
.zoom { position: absolute; top: 12px; left: 12px; border-radius: 3px; overflow: hidden; box-shadow: 0 0 0 2px rgba(0, 0, 0, 0.2); }
.zoom button { display: block; width: 30px; height: 30px; padding: 0; border: 0; border-bottom: 1px solid #43536a; background: #1b2b42; color: #f4f2ec; font: 700 22px/30px "Liberation Sans", sans-serif; }
.zoom button:last-child { border-bottom: 0; }
.full {
  position: absolute; top: 7px; right: 7px; display: flex; align-items: center; gap: 8px; height: 36px; padding: 0 10px;
  border: 1px solid var(--line); border-radius: 8px; background: #f9faf9;
}
.credit { position: absolute; right: 0; bottom: 0; height: 16px; padding: 0 5px; background: #1b2b42; color: #e8e8e4; font: 12px/16px "Liberation Sans", sans-serif; }
.credit a { text-decoration: underline; }
.legend { display: flex; align-items: center; gap: 16px; margin-top: 8px; color: var(--muted); font-size: 11px; line-height: 17px; }
.key { display: flex; align-items: center; gap: 6px; }
.key i { width: 8px; height: 8px; border-radius: 50%; }

.sites { padding-bottom: 16px; }
table { width: 100%; border-collapse: separate; border-spacing: 0; table-layout: fixed; }
.c1 { width: 28.4%; }
.c2 { width: 23%; }
.c4 { width: 16%; }
th { padding: 7px 12px; border-bottom: 1px solid var(--line); color: var(--muted); font: 400 12px/18px var(--mono); letter-spacing: 0.12em; text-align: left; text-transform: uppercase; }
td { padding: 10px 12px; border-bottom: 1px solid #e2e0d9; line-height: 19px; }
.num { text-align: right; }

.watermark { position: absolute; inset: 0; overflow: hidden; pointer-events: none; }
.marks {
  position: absolute; left: -535px; top: 258px; display: grid; grid-template-columns: repeat(5, 382px); grid-auto-rows: 82px;
  transform: rotate(-24deg); transform-origin: 0 0; color: rgba(7, 24, 58, 0.14); font: 11px/16px var(--mono); letter-spacing: 0.24em; white-space: nowrap;
}
</style>
